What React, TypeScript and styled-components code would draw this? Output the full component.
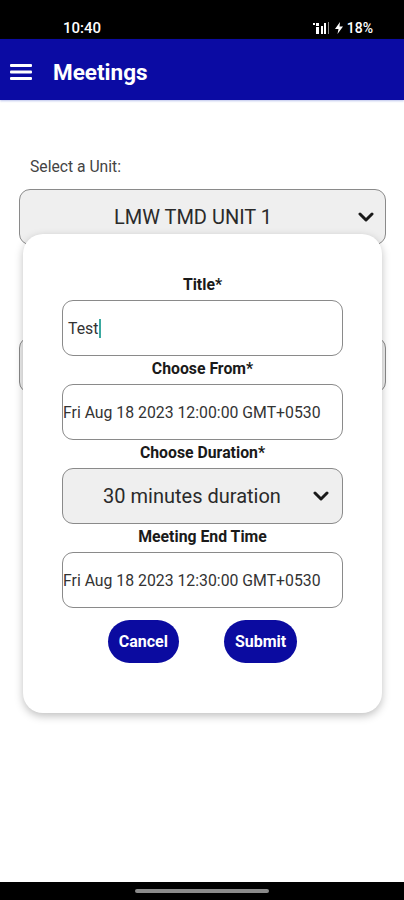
import React from 'react'
import styled, { createGlobalStyle } from 'styled-components'

const GlobalStyle = createGlobalStyle`
  html, body {
    margin: 0;
    padding: 0;
    background: #fff;
    font-family: Roboto, 'Noto Sans', sans-serif;
  }
`

const ChevronDown = () => (
  <svg width="16" height="10" viewBox="0 0 16 10">
    <polyline points="2,2 8,8 14,2" fill="none" stroke="#1a1a1a" strokeWidth="3" strokeLinecap="round" strokeLinejoin="round" />
  </svg>
)

const MenuIcon = () => (
  <svg width="22" height="18" viewBox="0 0 22 18">
    <rect x="0" y="1" width="22" height="3" rx="1" fill="#fff" />
    <rect x="0" y="7.5" width="22" height="3" rx="1" fill="#fff" />
    <rect x="0" y="14" width="22" height="3" rx="1" fill="#fff" />
  </svg>
)

const SignalIcon = () => (
  <svg width="18" height="12" viewBox="0 0 18 12">
    <rect x="0" y="1" width="2" height="2" fill="#fff" />
    <rect x="3" y="1" width="3" height="3" fill="#fff" />
    <rect x="3" y="5" width="3" height="7" fill="#fff" />
    <rect x="8" y="4" width="2" height="8" fill="#fff" />
    <rect x="11" y="1" width="2" height="11" fill="#fff" />
    <rect x="15" y="0" width="1" height="12" fill="#888" />
  </svg>
)

const BoltIcon = () => (
  <svg width="8" height="12" viewBox="0 0 8 12">
    <polygon points="5,0 0,7 3.5,7 2.5,12 8,4.5 4.5,4.5" fill="#fff" />
  </svg>
)

const App = () => {
  return (
    <>
      <GlobalStyle />
      <Screen>
        <StatusBar>
          <Clock>10:40</Clock>
          <StatusIcons>
            <SignalIcon />
            <BoltIcon />
            <Battery>18%</Battery>
          </StatusIcons>
        </StatusBar>
        <AppBar>
          <MenuIcon />
          <AppTitle>Meetings</AppTitle>
        </AppBar>
        <Content>
          <UnitLabel>Select a Unit:</UnitLabel>
          <SelectBox>
            <SelectText>LMW TMD UNIT 1</SelectText>
            <ChevronDown />
          </SelectBox>
          <SelectBox $gap={92}>
            <SelectText />
          </SelectBox>

          <Modal>
            <FieldLabel>Title*</FieldLabel>
            <TextBox $pad={5}>
              Test<Caret />
            </TextBox>
            <FieldLabel>Choose From*</FieldLabel>
            <TextBox>Fri Aug 18 2023 12:00:00 GMT+0530</TextBox>
            <FieldLabel>Choose Duration*</FieldLabel>
            <DurationBox>
              <SelectText>30 minutes duration</SelectText>
              <ChevronDown />
            </DurationBox>
            <FieldLabel>Meeting End Time</FieldLabel>
            <TextBox>Fri Aug 18 2023 12:30:00 GMT+0530</TextBox>
            <ButtonRow>
              <PillButton>Cancel</PillButton>
              <PillButton>Submit</PillButton>
            </ButtonRow>
          </Modal>
        </Content>
        <NavBar>
          <Handle />
        </NavBar>
      </Screen>
    </>
  )
}

const Screen = styled.div`
  width: 404px;
  height: 900px;
  display: flex;
  flex-direction: column;
  overflow: hidden;
  background: #fff;
`

const StatusBar = styled.div`
  height: 39px;
  background: #000;
  color: #fff;
  display: flex;
  align-items: center;
  justify-content: space-between;
  padding: 16px 31px 0 63px;
  box-sizing: border-box;
`

const Clock = styled.span`
  font-size: 15px;
  font-weight: 500;
`

const StatusIcons = styled.div`
  display: flex;
  align-items: center;
  gap: 4px;
`

const Battery = styled.span`
  font-size: 14px;
  font-weight: 500;
`

const AppBar = styled.div`
  height: 61px;
  background: #0b0ba3;
  display: flex;
  align-items: center;
  gap: 21px;
  padding: 5px 0 0 10px;
  box-sizing: border-box;
  box-shadow: 0 1px 2px rgba(60, 80, 200, 0.35);
  position: relative;
  z-index: 1;
`

const AppTitle = styled.div`
  color: #fff;
  font-size: 22.5px;
  font-weight: 700;
`

const Content = styled.div`
  flex: 1;
  position: relative;
  padding: 57px 18px 0 19px;
  display: flex;
  flex-direction: column;
`

const UnitLabel = styled.div`
  font-size: 15.7px;
  line-height: 19px;
  color: #444;
  margin-left: 11px;
  margin-bottom: 13px;
`

const SelectBox = styled.div<{ $gap?: number }>`
  height: 56px;
  margin-top: ${(p) => p.$gap ?? 0}px;
  background: #efefef;
  border: 1px solid #8a8a8a;
  border-radius: 11px;
  box-sizing: border-box;
  display: flex;
  align-items: center;
  padding: 0 11px 0 8px;
`

const SelectText = styled.div`
  flex: 1;
  text-align: center;
  font-size: 20px;
  color: #2a2a2a;
`

const Modal = styled.div`
  position: absolute;
  top: 134px;
  left: 23px;
  width: 359px;
  height: 479px;
  box-sizing: border-box;
  background: #fff;
  border-radius: 20px;
  box-shadow: 0 3px 8px rgba(0, 0, 0, 0.25);
  display: flex;
  flex-direction: column;
  align-items: center;
  padding-top: 42px;
`

const FieldLabel = styled.div`
  font-size: 15.8px;
  font-weight: 700;
  line-height: 17px;
  color: #1a1a1a;
  margin-bottom: 7px;
`

const TextBox = styled.div<{ $pad?: number }>`
  width: 281px;
  height: 56px;
  box-sizing: border-box;
  border: 1px solid #8a8a8a;
  border-radius: 11px;
  display: flex;
  align-items: center;
  padding-left: ${(p) => p.$pad ?? 0}px;
  font-size: 15.8px;
  color: #333;
  margin-bottom: 4px;
  white-space: nowrap;
`

const Caret = styled.span`
  display: inline-block;
  width: 1.5px;
  height: 19px;
  background: #3aa9a0;
  margin-left: 1px;
`

const DurationBox = styled(SelectBox)`
  width: 281px;
  margin-bottom: 4px;
  padding-right: 13px;
`

const ButtonRow = styled.div`
  display: flex;
  gap: 45px;
  margin-top: 8px;
`

const PillButton = styled.button`
  height: 43px;
  padding: 0 11px;
  border: none;
  border-radius: 22px;
  background: #0b0ba0;
  color: #fff;
  font-family: Roboto, sans-serif;
  font-size: 16px;
  font-weight: 700;
`

const NavBar = styled.div`
  height: 18px;
  background: #000;
  display: flex;
  justify-content: center;
  padding-top: 7px;
  box-sizing: border-box;
`

const Handle = styled.div`
  width: 134px;
  height: 4px;
  border-radius: 2px;
  background: #8a8a8a;
`

export default App
